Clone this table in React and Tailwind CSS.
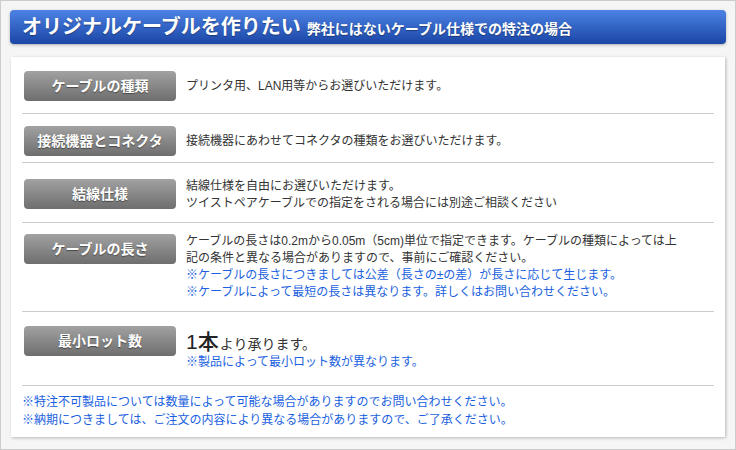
const font = { fontFamily: '"Liberation Sans", "Noto Sans CJK JP", sans-serif' };

function Label({ children }) {
  return (
    <div className="w-[152px] h-[30px] shrink-0 rounded-[4px] bg-gradient-to-b from-[#a2a2a2] to-[#6e6e6e] flex items-center justify-center text-white font-bold text-[14px] leading-none [text-shadow:0_1px_1px_rgba(0,0,0,0.45)]">
      {children}
    </div>
  );
}

export default function App() {
  return (
    <div
      className="w-[736px] h-[450px] border border-[#cccccc] bg-[#f5f5f5] pt-[9px] px-[9px] text-[#333] overflow-hidden"
      style={font}
    >
      <div className="h-[34px] rounded-[4px] bg-gradient-to-b from-[#4c82e4] to-[#1b46a6] shadow-[0_1px_3px_rgba(0,0,0,0.3)] flex items-baseline pl-[12px] pt-[5px] text-white font-bold [text-shadow:0_1px_1px_rgba(0,0,0,0.35)]">
        <span className="text-[20px] leading-[24px]">オリジナルケーブルを作りたい</span>
        <span className="text-[14px] leading-[24px] ml-[6px]">弊社にはないケーブル仕様での特注の場合</span>
      </div>

      <div className="mt-[13px] mx-[1px] h-[380px] bg-white shadow-[1px_1px_3px_rgba(0,0,0,0.25)] px-[11px] text-[12px]">
        {/* Row 1 */}
        <div className="flex items-center pt-[14px] pb-[12px] pl-[2px] border-b border-[#cccccc]">
          <Label>ケーブルの種類</Label>
          <div className="ml-[10px] leading-[17px]">プリンタ用、LAN用等からお選びいただけます。</div>
        </div>
        {/* Row 2 */}
        <div className="flex items-center pt-[12px] pb-[6px] pl-[2px] border-b border-[#cccccc]">
          <Label>接続機器とコネクタ</Label>
          <div className="ml-[10px] leading-[17px]">接続機器にあわせてコネクタの種類をお選びいただけます。</div>
        </div>
        {/* Row 3 */}
        <div className="flex items-start pt-[15px] pb-[10px] pl-[2px] border-b border-[#cccccc]">
          <div className="mt-[1px]">
            <Label>結線仕様</Label>
          </div>
          <div className="ml-[10px] leading-[17px]">
            結線仕様を自由にお選びいただけます。
            <br />
            ツイストペアケーブルでの指定をされる場合には別途ご相談ください
          </div>
        </div>
        {/* Row 4 */}
        <div className="flex items-start pt-[10px] pb-[10px] pl-[2px] border-b border-[#cccccc]">
          <div className="mt-[1px]">
            <Label>ケーブルの長さ</Label>
          </div>
          <div className="ml-[10px] leading-[17px]">
            ケーブルの長さは0.2mから0.05m（5cm)単位で指定できます。ケーブルの種類によっては上
            <br />
            記の条件と異なる場合がありますので、事前にご確認ください。
            <div className="text-[#1a5fe0]">
              ※ケーブルの長さにつきましては公差（長さの±の差）が長さに応じて生じます。
              <br />
              ※ケーブルによって最短の長さは異なります。詳しくはお問い合わせください。
            </div>
          </div>
        </div>
        {/* Row 5 */}
        <div className="flex items-start pt-[14px] pb-[14px] pl-[2px] border-b border-[#cccccc]">
          <Label>最小ロット数</Label>
          <div className="ml-[10px] mt-[3px]">
            <div className="h-[25px] flex items-baseline">
              <span className="text-[21px] leading-[25px] font-medium text-[#222]">1本</span>
              <span className="text-[14px] leading-[25px] ml-[1px]">より承ります。</span>
            </div>
            <div className="leading-[17px] text-[#1a5fe0]">※製品によって最小ロット数が異なります。</div>
          </div>
        </div>
        {/* Footer */}
        <div className="pt-[7px] leading-[18px] text-[#1a5fe0]">
          ※特注不可製品については数量によって可能な場合がありますのでお問い合わせください。
          <br />
          ※納期につきましては、ご注文の内容により異なる場合がありますので、ご了承ください。
        </div>
      </div>
    </div>
  );
}
